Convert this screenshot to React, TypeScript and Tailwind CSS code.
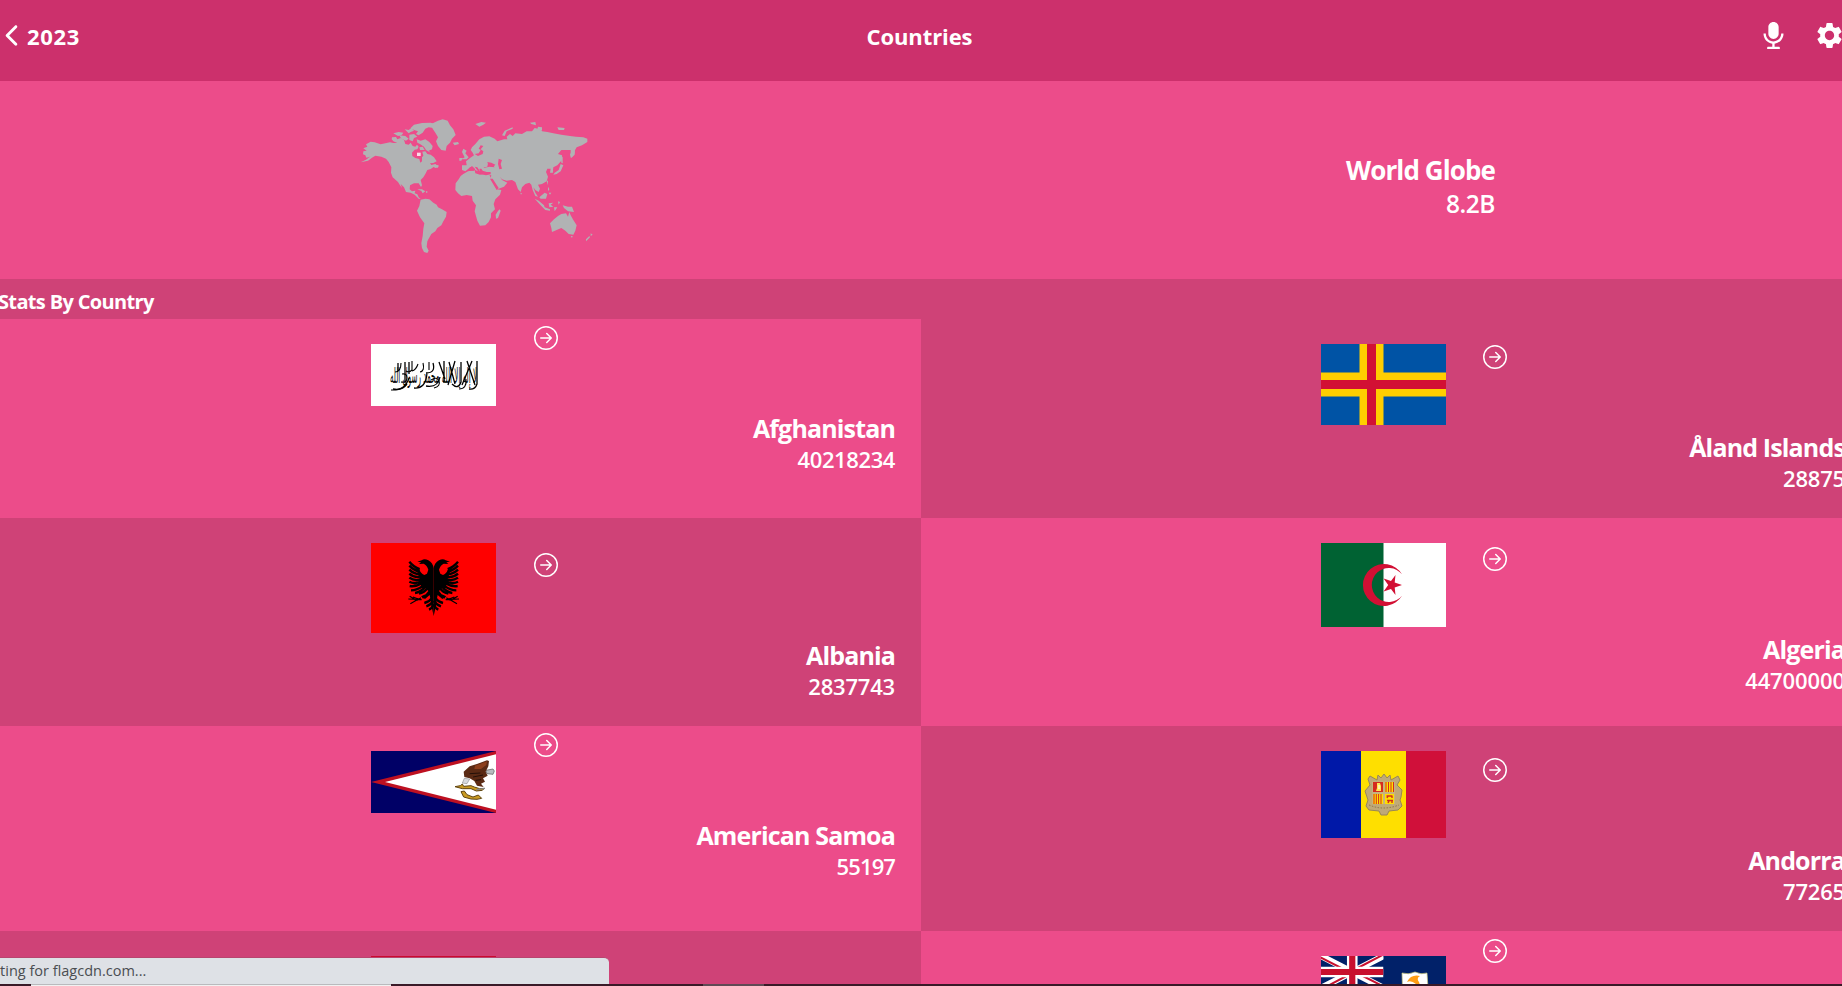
import React from "react";
import { AiFillAudio } from "react-icons/ai";
import { BsArrowRightCircle } from "react-icons/bs";
import { IoIosArrowBack } from "react-icons/io";
import { MdSettings } from "react-icons/md";

function WorldMap() {
  return (
    <svg viewBox="0 0 840 510" className="h-[170px] w-[280px] shrink-0" fill="#b1b3b4" aria-hidden="true">
      {/* North America */}
      <path d="M62 187L78 179L92 169L88 171L79 173L76 166L69 163L70 154L80 152L70 145L82 140L78 133L92 125L104 127L122 133L150 127L160 129L172 129L160 124L155 118L156 112L168 111L172 118L182 114L192 120L196 132L206 134L212 128L218 138L226 140L231 134L236 140L232 148L224 149L216 158L217 168L226 174L238 177L241 188L246 184L246 172L250 167L247 155L256 154L262 162L272 164L282 172L290 184L280 189L270 190L274 195L286 192L296 200L286 204L282 200L272 207L262 210L256 222L250 232L242 240L246 256L243 261L236 250L222 250L210 256L209 268L216 274L226 272L224 280L232 283L236 292L242 297L236 296L224 284L212 278L198 276L192 262L182 252L186 264L180 256L174 246L158 232L153 218L154 202L146 186L138 176L124 170L106 167L96 173L84 182Z" />
      <path d="M160 100L176 96L190 98L186 104L174 108ZM178 106L196 108L206 116L198 122L184 116ZM194 88L206 90L214 84L222 92L212 96L206 100ZM208 104L222 102L232 110L222 114L218 124L208 120ZM212 84L222 74L246 69L272 68L284 72L280 84L266 82L256 86L248 98L236 106L228 102L234 94L222 90ZM230 118L242 122L256 118L268 126L278 138L276 148L266 152L272 158L258 150L252 140L240 132L232 128ZM238 142L248 140L254 150L240 150Z" />
      <path d="M272 73L294 62L308 58L323 62L330 76L340 88L347 105L336 116L330 128L320 138L317 152L304 150L294 138L288 124L294 112L286 98L278 86Z" />
      <path d="M338 128L354 126L357 132L344 136ZM232 268L246 268L256 274L248 280L244 273ZM258 273L264 276L258 279ZM284 194L296 196L294 203L282 202Z" />
      <rect x="231" y="158" width="11" height="10" fill="#f8dce6" />
      {/* South America */}
      <path d="M242 299L256 296L268 298L280 308L290 314L294 322L306 328L320 336L318 350L310 364L304 376L292 384L286 394L274 402L266 416L262 424L260 440L266 452L262 459L252 456L246 444L244 430L248 408L250 386L253 370L240 352L231 332L238 318L240 308Z" />
      {/* Africa */}
      <path d="M370 222L384 214L404 211L406 220L420 224L436 222L448 224L454 236L464 256L470 268L484 270L480 284L466 298L461 312L465 328L453 340L453 352L446 366L436 376L420 377L412 362L404 334L408 316L398 302L396 288L380 285L364 288L354 280L346 270L347 250L356 238L362 228Z" />
      <path d="M478 328L482 332L474 354L468 356L467 344L472 336Z" />
      {/* Eurasia */}
      <path d="M366 196L380 196L378 184L390 174L402 166L398 158L392 150L396 142L406 132L418 118L432 110L448 109L464 116L472 124L492 118L502 118L500 110L510 102L518 108L526 100L546 102L560 94L576 94L584 84L600 88L606 94L622 96L640 100L664 104L690 108L708 110L730 112L742 116L742 126L726 136L710 142L704 152L704 164L694 174L690 164L696 150L684 150L664 150L654 162L666 166L664 182L652 196L640 202L638 218L630 218L632 206L622 206L618 216L624 230L620 244L606 252L594 254L600 266L596 276L586 270L580 262L586 278L594 290L586 288L578 270L574 254L568 248L556 252L546 262L542 276L534 268L526 246L516 240L500 242L486 238L480 230L486 240L502 248L492 260L472 268L462 250L452 234L454 226L436 224L424 212L430 204L448 200L464 202L456 192L444 190L442 200L432 202L428 212L420 214L412 202L404 200L414 214L406 210L396 198L386 206L376 214L366 210Z" />
      <path d="M404 162L416 160L422 150L416 146L422 136L430 138L422 148L430 154L428 162L414 168ZM442 186L454 188L466 194L460 200L446 198ZM476 176L486 180L482 192L486 206L478 208L474 192Z" fill="#ec4c8a" />
      <path d="M450 236L458 236L476 264L470 270ZM418 206L424 206L428 212L440 216L452 216L452 223L438 226L422 222ZM380 212L390 202L398 200L406 208L402 212L388 212Z" fill="#ec4c8a" />
      <path d="M370 146L380 152L376 160L386 172L380 178L364 178L374 172L370 164L366 156ZM358 174L368 174L364 182L358 182ZM406 72L424 66L438 68L430 74L418 80ZM486 106L494 92L518 82L518 86L500 94L494 108ZM570 68L586 66L588 76L574 72ZM594 80L606 82L606 92L592 88ZM652 82L674 84L672 90L656 90Z" />
      <path d="M692 150L704 150L704 160L692 174ZM662 164L668 172L668 190L664 188ZM662 192L670 196L662 214L650 222L640 224L644 218L656 210ZM634 208L640 212L636 220ZM620 242L624 242L623 256ZM624 260L628 268L624 274ZM626 278L634 278L630 284ZM541 278L546 280L543 284Z" />
      <path d="M584 296L596 302L612 316L614 322L630 328L630 332L616 330L602 316ZM598 292L614 278L622 282L618 296L602 296ZM626 310L640 308L632 314L640 320L628 322ZM642 322L652 322L644 334ZM668 316L684 320L696 320L702 336L684 334L672 324ZM654 304L660 306L656 314Z" />
      {/* Oceania */}
      <path d="M630 370L642 358L654 348L664 342L678 340L684 350L688 336L692 346L700 360L710 376L706 392L700 404L686 402L676 392L664 384L650 390L636 396L634 384ZM692 408L698 408L696 414ZM752 400L758 404L752 408ZM748 408L750 412L738 424L738 418Z" />
    </svg>
  );
}

function AfghanistanFlag() {
  return (
    <svg viewBox="0 0 125 62" className="block h-[62px] w-[125px]">
      <rect width="125" height="62" fill="#fff" />
      <g transform="translate(19 39) scale(1 1.6)" opacity="0.98">
        <text x="0" y="0" direction="rtl" textAnchor="end" fontSize="13" textLength="87" lengthAdjust="spacingAndGlyphs" className="font-['DejaVu_Sans',sans-serif]">
          لا إله إلا الله محمد رسول الله
        </text>
      </g>
      <g fill="none" stroke="#000" strokeWidth="1.3">
        <path d="M106 17v23q-2 6-8 5M101 17l-10 24M96 17l8 24M90 18v20q-3 8-9 2M84 17l-7 24M78 18l6 22M73 17v22M68 18l6 17M62 19q3 10-7 10M55 42q12 2 14-9M22 45q9 2 14-5M27 19v8M34 18v21M38 18v12M43 44q12 1 13-15" />
        <path d="M24 28q6 0 6-9M41 17v9q-3 3-6 1M47 20q-2 6-6 7M58 18v8M52 19q2 8-3 9M20 46q14 1 18-12M31 30q5-1 5 4t-6 4M60 36q6-4 8 1t-5 7M88 45q8 0 7-10" strokeWidth="1.1" />
      </g>
    </svg>
  );
}

function AlandFlag() {
  return (
    <svg viewBox="0 0 125 81" className="block h-[81px] w-[125px]">
      <rect width="125" height="81" fill="#0053a5" />
      <path d="M38.5 0H62.5V81H38.5ZM0 28.5H125V52.5H0Z" fill="#ffce00" />
      <path d="M46 0H55V81H46ZM0 36H125V45H0Z" fill="#d21034" />
    </svg>
  );
}

function EagleHalf() {
  return (
    <g>
      <path d="M188 76Q186 60 172 52Q160 46 152 52L139 56L150 58L144 63L158 62Q168 66 172 80L168 92L160 96Q148 92 144 76L134 72L146 108L152 136L162 134L172 144L164 154L150 160L162 168L176 156L178 166L182 192L188 219Z" />
      <g fill="none" stroke="#000" strokeWidth="7">
        <path d="M115 56Q128 72 146 78M115 68Q128 82 146 86M115 80Q128 93 146 94M115 92Q128 104 146 102M115 104Q128 114 148 110M115 116Q130 124 150 116M116 129Q134 132 154 121M120 142Q138 142 158 127M132 150Q150 148 164 130M144 152Q160 150 170 134" />
        <path d="M184 164Q176 176 160 180M186 174Q180 186 166 190M187 184Q184 196 174 200M164 158L154 164" />
      </g>
      <path d="M112 168L152 170M116 160L136 172L118 182M126 162L142 168L128 176M150 164L138 172" fill="none" stroke="#000" strokeWidth="3.5" />
    </g>
  );
}

function AlbaniaFlag() {
  return (
    <svg viewBox="0 0 375 270" className="block h-[90px] w-[125px]">
      <rect width="375" height="270" fill="#f00" />
      <EagleHalf />
      <g transform="translate(376 0) scale(-1 1)">
        <EagleHalf />
      </g>
    </svg>
  );
}

function AlgeriaFlag() {
  return (
    <svg viewBox="0 0 125 84" className="block h-[84px] w-[125px]">
      <rect width="125" height="84" fill="#fff" />
      <rect width="62.5" height="84" fill="#006233" />
      <path d="M81 31.3A21 21 0 1 0 81 52.7A17 17 0 1 1 81 31.3Z" fill="#d21034" />
      <path d="M81 42L73.7 44.4L74.5 52L70 46L62.6 48.5L67.2 42L62.6 35.5L70 38L74.5 32L73.7 39.6Z" fill="#d21034" />
    </svg>
  );
}

function AmericanSamoaFlag() {
  return (
    <svg viewBox="0 0 375 186" className="block h-[62px] w-[125px]">
      <rect width="375" height="186" fill="#006" />
      <path d="M0 93L375 0V186Z" fill="#bd1021" />
      <path d="M42 93L375 10V176Z" fill="#fff" />
      <path d="M344 58L366 54L370 60L366 70L348 68Z" fill="#b9bcc0" stroke="#555" strokeWidth="2" />
      <path d="M278 62L296 46L320 38L348 28L354 30L352 46L344 62L350 74L336 82L342 92L330 98L338 108L318 104L310 90L296 82L280 78Z" fill="#5a2a14" />
      <path d="M312 44L348 31L346 42L330 54L310 54Z" fill="#8c3f1c" />
      <path d="M296 68L328 66M306 78L336 72M314 88L330 86" stroke="#241008" strokeWidth="3" />
      <path d="M280 82L296 84L288 98L274 96Z" fill="#d8dade" stroke="#777" strokeWidth="1.5" />
      <path d="M252 107L268 104L274 99L278 106L300 104L310 108L326 113L340 112L334 118L316 120L300 113L274 113ZM270 122L280 120L288 131L306 138L322 132L332 142L318 145L300 144L278 138Z" fill="#c99a22" stroke="#5f4410" strokeWidth="3" />
      <path d="M316 116L342 112" stroke="#888" strokeWidth="4" />
    </svg>
  );
}

function AndorraFlag() {
  return (
    <svg viewBox="0 0 125 87" className="block h-[87px] w-[125px]">
      <rect width="125" height="87" fill="#d0103a" />
      <rect width="85" height="87" fill="#fedf00" />
      <rect width="40" height="87" fill="#0018a8" />
      <path d="M57 24L60 27L63 23L66 27L69 24L70 29L77 25L79 29L76 34L81 39L80 46L79 49L81 55L77 59L68 60L66 64H60L58 60L48 59L45 55L47 49L44 40L49 34L47 28L49 25L56 29Z" fill="#bfa978" stroke="#9a8756" />
      <path d="M48 54Q62 60 78 54" fill="none" stroke="#8b7448" strokeDasharray="1.5 1.5" />
      <rect x="51" y="30.5" width="23" height="22.5" fill="#c7b37f" />
      <rect x="52" y="31" width="10" height="10" fill="#d52b1e" />
      <path d="M56 32h3l1 3v5h-5l1-3Z" fill="#ffe650" />
      <path d="M58 34v4" stroke="#fff" />
      <rect x="64" y="31" width="9" height="10" fill="#fedf00" />
      <path d="M65 31v10M67.5 31v10M70 31v10M72.5 31v10" stroke="#d52b1e" />
      <rect x="52" y="43" width="10" height="10" fill="#fedf00" />
      <path d="M53 43v10M55.3 43v10M57.6 43v10M60 43v10" stroke="#d52b1e" />
      <rect x="64" y="43" width="9" height="10" fill="#fedf00" />
      <path d="M65.5 45h6M66 49.5h6M66 47l1-2M71 47v-2M67 52l1-2M71 52v-2" stroke="#d52b1e" strokeWidth="1.4" />
    </svg>
  );
}

function AngolaFlag() {
  return (
    <svg viewBox="0 0 125 84" className="block h-[84px] w-[125px]">
      <rect width="125" height="84" fill="#000" />
      <rect width="125" height="42" fill="#cc092f" />
    </svg>
  );
}

function AnguillaFlag() {
  return (
    <svg viewBox="0 0 125 62" className="block h-[62px] w-[125px]">
      <rect width="125" height="62" fill="#012169" />
      <svg width="62.5" height="32" viewBox="0 0 62.5 32">
        <path d="M0 0L62.5 32M62.5 0L0 32" stroke="#fff" strokeWidth="6.4" />
        <path d="M-1 1L30 17M63.5 31L32 15M61.5 -1L31 15M1 33L31 17" stroke="#c8102e" strokeWidth="2" />
        <path d="M31.25 0V32M0 16H62.5" stroke="#fff" strokeWidth="10.6" />
        <path d="M31.25 0V32M0 16H62.5" stroke="#c8102e" strokeWidth="6.2" />
      </svg>
      <path d="M81 17Q88 19 94 16Q100 19 106 17L107 32Q106 42 94 46Q82 42 81.500 32Z" fill="#fff" stroke="#c9c77b" strokeWidth=".7" />
      <path d="M86 26Q90 18 99 20Q95 22 98 26Q100 32 95 28Q90 24 86 26ZM88 29Q92 26 94 32L89 31Z" fill="#ff9d14" />
    </svg>
  );
}

type Country = {
  id: string;
  name?: string;
  population?: string;
  Flag: React.FC;
  tone: string;
  height: string;
  arrow: string;
  tracking?: string;
};

const LIGHT = "bg-[#ec4c8a]";
const DARK = "bg-[#cf4277]";

const countries: Country[] = [
  { id: "af", name: "Afghanistan", population: "40218234", Flag: AfghanistanFlag, tone: LIGHT, height: "h-[199px]", arrow: "pl-[38px] mt-[7px]", tracking: "tracking-[-0.4px]" },
  { id: "ax", name: "Åland Islands", population: "28875", Flag: AlandFlag, tone: DARK, height: "h-[199px]", arrow: "pl-[37px] mt-[26px]", tracking: "tracking-[-0.2px]" },
  { id: "al", name: "Albania", population: "2837743", Flag: AlbaniaFlag, tone: DARK, height: "h-[208px]", arrow: "pl-[38px] mt-[35px]", tracking: "tracking-[-0.2px]" },
  { id: "dz", name: "Algeria", population: "44700000", Flag: AlgeriaFlag, tone: LIGHT, height: "h-[208px]", arrow: "pl-[37px] mt-[29px]", tracking: "tracking-[-0.1px]" },
  { id: "as", name: "American Samoa", population: "55197", Flag: AmericanSamoaFlag, tone: LIGHT, height: "h-[205px]", arrow: "pl-[38px] mt-[7px]", tracking: "tracking-[-0.9px]" },
  { id: "ad", name: "Andorra", population: "77265", Flag: AndorraFlag, tone: DARK, height: "h-[205px]", arrow: "pl-[37px] mt-[32px]", tracking: "tracking-[-0.2px]" },
  { id: "ao", Flag: AngolaFlag, tone: DARK, height: "h-[208px]", arrow: "pl-[38px] mt-[29px]" },
  { id: "ai", Flag: AnguillaFlag, tone: LIGHT, height: "h-[208px]", arrow: "pl-[37px] mt-[8px]" },
];

function CountryCard({ name, population, Flag, tone, height, arrow, tracking }: Country) {
  return (
    <article className={`flex items-start pr-[26px] pl-[400px] ${tone} ${height}`}>
      <div className="mt-[25px] shrink-0">
        <Flag />
      </div>
      <div className={`flex flex-1 flex-col ${arrow}`}>
        <BsArrowRightCircle className="size-6" />
        {name && (
          <div className="mt-[63px] flex flex-col items-end whitespace-nowrap">
            <h3 className="text-[25px] leading-[30px] font-bold tracking-[-0.85px]">{name}</h3>
            <p className={`text-[22px] leading-[32px] font-semibold ${tracking}`}>{population}</p>
          </div>
        )}
      </div>
    </article>
  );
}

export default function App() {
  return (
    <div className="relative flex h-[986px] w-[1842px] flex-col overflow-hidden bg-[#ec4c8a] font-['Open_Sans','Noto_Sans',sans-serif] text-white">
      <header className="grid h-[81px] shrink-0 grid-cols-3 items-start bg-[#cc306c]">
        <div className="flex items-start">
          <IoIosArrowBack className="mt-[20px] -ml-[4px] size-[31px] shrink-0" />
          <span className="mt-[22px] text-[22px] leading-[28px] font-bold tracking-[0.7px]">2023</span>
        </div>
        <h1 className="mt-[22px] pr-[3px] text-center text-[22px] leading-[28px] font-bold tracking-[-0.1px]">Countries</h1>
        <div className="-mr-[3px] flex justify-end gap-[25px] pt-[20px]">
          <AiFillAudio className="size-[31px]" />
          <MdSettings className="size-[31px]" />
        </div>
      </header>

      <section className="flex h-[198px] shrink-0 items-start justify-between pt-[19px] pr-[347px] pl-[340px]">
        <WorldMap />
        <div className="mt-[54px] flex flex-col items-end">
          <h2 className="text-[26px] leading-[33px] font-bold tracking-[-0.9px]">World Globe</h2>
          <p className="text-[24.5px] leading-[33px] font-semibold tracking-[-0.5px]">8.2B</p>
        </div>
      </section>

      <h2 className="-ml-[2px] h-10 shrink-0 bg-[#cf4277] pt-[8px] text-[20px] leading-[29px] font-bold tracking-[-0.65px]">Stats By Country</h2>

      <main className="-ml-[29px] grid h-[665px] w-[1900px] shrink-0 grid-cols-2 content-start overflow-hidden">
        {countries.map((country) => (
          <CountryCard key={country.id} {...country} />
        ))}
      </main>

      <div className="absolute bottom-[2px] left-0 flex h-[27px] w-[609px] items-center justify-start overflow-hidden rounded-tr-[5px] border-t border-[#b8456f] bg-[#dee1e6]">
        <span className="-ml-[25px] text-[14.5px] whitespace-nowrap text-[#4a4d51]">Waiting for flagcdn.com...</span>
      </div>
      <div className="absolute bottom-0 left-0 flex h-[2px] w-full bg-[#3a1a28]">
        <div className="ml-[31px] h-full w-[360px] border-t border-[#b9babd] bg-[#f1f1f1]" />
        <div className="ml-[312px] h-full w-[61px] bg-[#604a55]" />
      </div>
    </div>
  );
}
